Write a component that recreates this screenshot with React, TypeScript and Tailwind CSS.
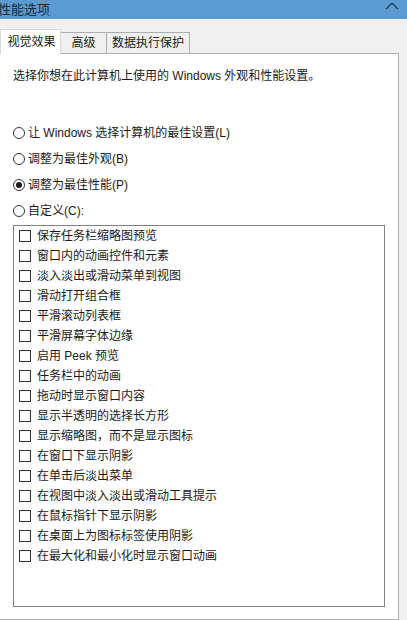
import React from "react";

const options = [
  { label: "让 Windows 选择计算机的最佳设置(L)", checked: false },
  { label: "调整为最佳外观(B)", checked: false },
  { label: "调整为最佳性能(P)", checked: true },
  { label: "自定义(C):", checked: false },
];

const effects = [
  "保存任务栏缩略图预览",
  "窗口内的动画控件和元素",
  "淡入淡出或滑动菜单到视图",
  "滑动打开组合框",
  "平滑滚动列表框",
  "平滑屏幕字体边缘",
  "启用 Peek 预览",
  "任务栏中的动画",
  "拖动时显示窗口内容",
  "显示半透明的选择长方形",
  "显示缩略图，而不是显示图标",
  "在窗口下显示阴影",
  "在单击后淡出菜单",
  "在视图中淡入淡出或滑动工具提示",
  "在鼠标指针下显示阴影",
  "在桌面上为图标标签使用阴影",
  "在最大化和最小化时显示窗口动画",
];

function Radio({ label, checked }: { label: string; checked: boolean }) {
  return (
    <div className="flex h-[26px] items-center">
      <span className="flex h-[12px] w-[12px] items-center justify-center rounded-full border border-[#333333] bg-white">
        {checked && <span className="h-[6px] w-[6px] rounded-full bg-[#1a1a1a]" />}
      </span>
      <span className="ml-[3px]">{label}</span>
    </div>
  );
}

export default function App() {
  return (
    <div
      className="flex h-[620px] w-[407px] flex-col overflow-hidden bg-[#f0f0f0] text-[12px] text-[#1a1a1a]"
      style={{ fontFamily: '"Liberation Sans", "Noto Sans CJK SC", sans-serif' }}
    >
      <div className="flex h-[19px] items-center justify-between bg-[#5b9bd1]">
        <span className="-ml-[2px] text-[13px] text-[#1a2a3a]">性能选项</span>
        <svg width="14" height="8" viewBox="0 0 14 8" className="mr-[8px] -mt-[8px]">
          <path d="M1 7 L7 1 L13 7" stroke="#2a3a4a" strokeWidth="1.2" fill="none" />
        </svg>
      </div>

      <div className="mt-[10px] flex h-[24px] items-end">
        <div className="relative z-10 -mb-px flex h-[25px] w-[61px] items-center justify-center border border-b-0 border-[#d9d9d9] bg-white pl-[2px]">
          视觉效果
        </div>
        <div className="flex h-[21px] w-[46px] items-center justify-center border border-b-0 border-l-0 border-[#adadad] bg-[#f0f0f0]">
          高级
        </div>
        <div className="flex h-[21px] w-[83px] items-center justify-center border border-b-0 border-l-0 border-[#adadad] bg-[#f0f0f0]">
          数据执行保护
        </div>
      </div>

      <div className="-ml-px mr-[8px] flex flex-1 flex-col border border-[#adadad] bg-white pl-[13px]">
        <p className="mt-[14px] h-[16px] leading-[16px]">选择你想在此计算机上使用的 Windows 外观和性能设置。</p>

        <div className="mt-[36px] flex flex-col">
          {options.map((o) => (
            <Radio key={o.label} label={o.label} checked={o.checked} />
          ))}
        </div>

        <div className="mr-[13px] mt-[1px] h-[382px] border border-[#828282] bg-white">
          {effects.map((e) => (
            <div key={e} className="flex h-[20px] items-center pl-[5px]">
              <span className="h-[12px] w-[12px] border border-[#333333] bg-white" />
              <span className="ml-[6px]">{e}</span>
            </div>
          ))}
        </div>
      </div>
    </div>
  );
}
